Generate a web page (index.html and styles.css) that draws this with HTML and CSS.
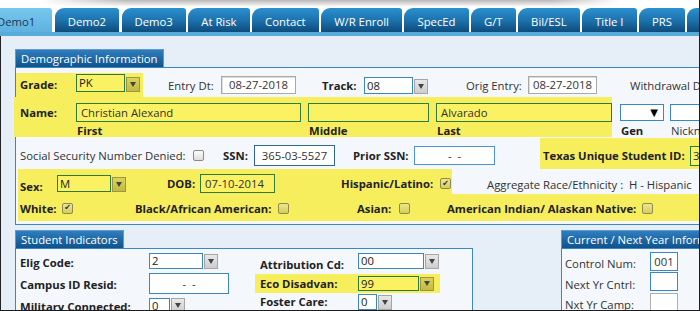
FILE: index.html
```html
<!DOCTYPE html>
<html>
<head>
<meta charset="utf-8">
<link rel="stylesheet" href="styles.css">
</head>
<body>
<div class="frame">
  <div class="shade"></div>
  <nav class="tabs">
    <span class="tab active">Demo1</span>
    <span class="tab">Demo2</span>
    <span class="tab">Demo3</span>
    <span class="tab">At Risk</span>
    <span class="tab">Contact</span>
    <span class="tab">W/R Enroll</span>
    <span class="tab">SpecEd</span>
    <span class="tab">G/T</span>
    <span class="tab">Bil/ESL</span>
    <span class="tab">Title I</span>
    <span class="tab">PRS</span>
    <span class="tab">Health</span>
  </nav>
  <div class="strip"></div>
  <main class="page">
    <section class="sec demo">
      <div class="sec-head">Demographic Information</div>
      <div class="sec-box demo-box">
        <div class="row r1">
          <div class="hl grade">
            <span class="lbl b grade-l">Grade:</span>
            <span class="combo"><span class="sel yel pk">PK</span><span class="btn yel"></span></span>
          </div>
          <span class="lbl entry-l">Entry Dt:</span>
          <span class="inp date">08-27-2018</span>
          <span class="lbl b track-l">Track:</span>
          <span class="combo"><span class="sel track">08</span><span class="btn"></span></span>
          <span class="lbl orig-l">Orig Entry:</span>
          <span class="inp date orig">08-27-2018</span>
          <span class="lbl wd-l">Withdrawal Dt:</span>
        </div>
        <div class="row r2">
          <div class="hl name">
            <span class="lbl b name-l">Name:</span>
            <div class="fcol first"><span class="inp yel-in">Christian Alexand</span><span class="sub b">First</span></div>
            <div class="fcol middle"><span class="inp yel-in"></span><span class="sub b">Middle</span></div>
            <div class="fcol last"><span class="inp yel-in">Alvarado</span><span class="sub b">Last</span></div>
          </div>
          <div class="fcol gen"><span class="inp gen-sel">&#9660;</span><span class="sub b">Gen</span></div>
          <div class="fcol nick"><span class="inp nick-in"></span><span class="sub">Nickname</span></div>
        </div>
        <div class="row r3">
          <span class="lbl ssnd-l">Social Security Number Denied:</span>
          <span class="chk"></span>
          <span class="lbl b ssn-l">SSN:</span>
          <span class="inp ssn">365-03-5527</span>
          <span class="lbl b pssn-l">Prior SSN:</span>
          <span class="inp pssn">-&nbsp;&nbsp;-</span>
          <div class="hl tx">
            <span class="lbl b tx-l">Texas Unique Student ID:</span>
            <span class="inp yel-in tx-in">3</span>
          </div>
        </div>
        <div class="row r4">
          <div class="hl sex">
            <span class="lbl b sex-l">Sex:</span>
            <span class="combo"><span class="sel yel sexsel">M</span><span class="btn yel"></span></span>
            <span class="lbl b dob-l">DOB:</span>
            <span class="inp yel-in dob">07-10-2014</span>
            <span class="lbl b hisp-l">Hispanic/Latino:</span>
            <span class="chk on yel"></span>
          </div>
          <span class="lbl agg-l">Aggregate Race/Ethnicity :&nbsp; H - Hispanic</span>
        </div>
        <div class="row r5">
          <div class="hl race">
            <span class="lbl b white-l">White:</span><span class="chk on yel"></span>
            <span class="lbl b black-l">Black/African American:</span><span class="chk yel"></span>
            <span class="lbl b asian-l">Asian:</span><span class="chk yel"></span>
            <span class="lbl b amer-l">American Indian/ Alaskan Native:</span><span class="chk yel"></span>
          </div>
        </div>
      </div>
    </section>
    <div class="lower">
      <section class="sec ind">
        <div class="sec-head">Student Indicators</div>
        <div class="sec-box ind-box">
          <div class="ind-grid">
            <div class="cell"><span class="lbl b il">Elig Code:</span><span class="combo"><span class="sel elig">2</span><span class="btn"></span></span></div>
            <div class="cell"><span class="lbl b rl attr-l">Attribution Cd:</span><span class="combo"><span class="sel attr">00</span><span class="btn"></span></span></div>
            <div class="cell"><span class="lbl b il">Campus ID Resid:</span><span class="inp campus">-&nbsp;&nbsp;-</span></div>
            <div class="cell hl eco"><span class="lbl b rl">Eco Disadvan:</span><span class="combo"><span class="sel yel ecosel">99</span><span class="btn yel"></span></span></div>
            <div class="cell"><span class="lbl b il">Military Connected:</span><span class="combo"><span class="sel mil">0</span><span class="btn"></span></span></div>
            <div class="cell fost-c"><span class="lbl b rl">Foster Care:</span><span class="combo"><span class="sel fost">0</span><span class="btn"></span></span></div>
          </div>
        </div>
      </section>
      <section class="sec cur">
        <div class="sec-head">Current / Next Year Information</div>
        <div class="sec-box cur-box">
          <div class="cur-row"><span class="lbl cl">Control Num:</span><span class="inp cin">001</span></div>
          <div class="cur-row"><span class="lbl cl">Next Yr Cntrl:</span><span class="inp cin"></span></div>
          <div class="cur-row"><span class="lbl cl">Nxt Yr Camp:</span><span class="inp cin grey"></span></div>
        </div>
      </section>
    </div>
  </main>
</div>
</body>
</html>
```
FILE: styles.css
```css
* { box-sizing: border-box; }
html, body { margin: 0; padding: 0; }
body {
  width: 700px; height: 311px; overflow: hidden; background: #fff;
  font-family: "Open Sans", "Liberation Sans", sans-serif;
  font-size: 11.3px; color: #333;
}
.frame {
  position: relative; width: 700px; height: 311px;
  border-right: 1px solid #1c1c1c; border-bottom: 1px solid #1c1c1c;
  overflow: hidden; display: flex; flex-direction: column; background: #fff;
}
.shade {
  position: absolute; top: 0; left: 40px; width: 580px; height: 7px; z-index: 2;
  background: linear-gradient(rgba(0,0,0,0.28), rgba(0,0,0,0));
  -webkit-mask-image: linear-gradient(to right, transparent, #000 15%, #000 88%, transparent);
  mask-image: linear-gradient(to right, transparent, #000 15%, #000 88%, transparent);
}
.tabs { display: flex; gap: 2.5px; padding-top: 8px; height: 32px; flex: none; }
.tab {
  flex: none; height: 24px; padding: 4px 13px 0; line-height: 20px;
  color: #fff; white-space: nowrap; border-radius: 9px 3px 0 0;
  background: linear-gradient(#2b90d1, #1b70aa 55%, #0d4b7c);
}
.tab.active {
  margin-left: -16px; padding: 4px 17px 0 13px; color: #1b3550;
  background: linear-gradient(#78c7ef, #5db2e0);
}
.strip { height: 4px; flex: none; background: #56abd9; }
.page {
  flex: 1; min-height: 0; background: #e6eef8;
  border-left: 1px solid #222; padding: 13px 0 0 14px;
}
.sec-head {
  display: inline-block; height: 18px; line-height: 17px; padding: 0 5px;
  color: #fff; white-space: nowrap;
  background: linear-gradient(#2f7ebe, #0f538d);
  border: 1px solid #5e9ad0; border-bottom: 0;
}
.sec-box { border: 1px solid #3b87c4; background: #f4f7fc; }
.demo-box { width: 800px; padding: 5px 0 3px; }

.row { display: flex; align-items: center; }
.lbl { flex: none; white-space: nowrap; }
.b { font-weight: 700; color: #222; }
.hl { background: #f7ee5e; }

.inp {
  flex: none; display: block; background: #fff; border: 1px solid #a9a9a9;
  white-space: nowrap; overflow: hidden; color: #333;
}
.yel-in { background: #faf262; border-color: #2f7a3c; padding-left: 4px; }
.combo { flex: none; display: flex; align-items: flex-end; }
.sel {
  display: block; border: 1px solid #3b87c4; background: #fff;
  padding-left: 2px; color: #222; white-space: nowrap;
}
.sel.yel { background: #faf262; border-color: #2f7a3c; }
.btn {
  width: 14px; height: 15px; margin-left: 1px;
  border: 1px solid #a5a5a5; background: linear-gradient(#e8e8e8, #cdcdcd);
  display: flex; align-items: center; justify-content: center;
}
.btn::after {
  content: ""; border-left: 3px solid transparent; border-right: 3px solid transparent;
  border-top: 5px solid #444;
}
.btn.yel { background: linear-gradient(#dbd25c, #c3ba44); border-color: #9c9640; }

.chk {
  flex: none; width: 11px; height: 11px; border: 1px solid #8a8a8a; border-radius: 2px;
  background: linear-gradient(#fdfdfd, #dedede);
  display: flex; align-items: center; justify-content: center;
  font-family: "DejaVu Sans", sans-serif; font-size: 8px; line-height: 1; color: #333;
}
.chk.yel { background: linear-gradient(#eee78a, #d5ce5c); border-color: #8d8a55; }
.chk.on::after { content: "\2714"; }

/* row 1 */
.r1 { height: 24px; }
.grade { width: 127px; align-self: stretch; display: flex; padding-left: 4px; }
.grade-l { width: 56px; line-height: 24px; }
.grade .combo { align-self: flex-start; margin-top: 1px; }
.pk { width: 49px; height: 18px; line-height: 16px; }
.entry-l { margin-left: 25px; width: 53px; }
.date {
  width: 75px; height: 18px; line-height: 16px; text-align: center;
  box-shadow: inset 1px 1px 0 #dcdcdc;
}
.track-l { margin-left: 26px; width: 42px; }
.track { width: 49px; height: 17px; line-height: 15px; }
.orig-l { margin-left: 38px; width: 62px; }
.orig { width: 69px; }
.wd-l { margin-left: 33px; }

/* row 2 */
.r2 { align-items: flex-start; }
.name {
  margin-left: -2px; width: 598px; height: 40px;
  display: flex; align-items: flex-start; padding: 6px 0 0 6px;
}
.name-l { width: 56px; line-height: 19px; }
.fcol { display: flex; flex-direction: column; flex: none; }
.fcol .inp { height: 19px; line-height: 17px; }
.first { width: 225px; }
.middle { width: 121px; margin-left: 7px; }
.last { width: 176px; margin-left: 7px; }
.sub { line-height: 15px; margin-top: 1px; padding-left: 1px; white-space: nowrap; }
.gen { margin-left: 8px; padding-top: 7px; width: 44px; }
.gen .sub, .nick .sub { margin-top: 2px; }
.fcol .gen-sel {
  height: 17px; line-height: 15px; border-color: #3b87c4; text-align: right;
  padding-right: 5px; font-family: "DejaVu Sans", sans-serif; font-size: 10px; color: #000;
}
.nick { margin-left: 6px; padding-top: 7px; }
.fcol .nick-in { width: 70px; height: 17px; border-color: #3b87c4; }

/* row 3 */
.r3 { height: 31px; }
.r3 > .lbl, .r3 > .inp, .r3 > .chk { margin-top: 4px; }
.ssnd-l { margin-left: 4px; width: 173px; }
.ssn-l { margin-left: 19px; width: 31px; }
.ssn {
  width: 81px; height: 21px; line-height: 19px; text-align: center;
  border-color: #2f6797;
}
.pssn-l { margin-left: 18px; width: 61px; }
.pssn {
  width: 81px; height: 19px; line-height: 17px; text-align: center;
  border-color: #4b95d3;
}
.tx {
  margin-left: 45px; flex: 1; align-self: stretch;
  display: flex; align-items: center; padding: 4px 0 0 3px;
}
.tx-l { width: 147px; }
.tx-in { width: 40px; height: 20px; line-height: 18px; padding-left: 2px; }

/* row 4 */
.r4 { height: 25px; }
.sex {
  margin-left: 2px; width: 434px; align-self: stretch;
  display: flex; align-items: center; padding: 4px 0 0 2px;
}
.sex-l { width: 37px; margin-top: 5px; }
.sexsel { width: 54px; height: 17px; line-height: 15px; }
.dob-l { margin-left: 41px; width: 33px; }
.dob { width: 75px; height: 19px; line-height: 17px; }
.hisp-l { margin-left: 66px; width: 99px; }
.agg-l { margin-left: 35px; margin-top: 5px; }

/* row 5 */
.r5 { height: 27px; }
.race {
  margin-left: 2px; flex: 1; align-self: stretch;
  display: flex; align-items: center; padding: 1px 0 0 2px;
}
.white-l { width: 42px; }
.black-l { margin-left: 62px; width: 143px; }
.asian-l { margin-left: 68px; width: 42px; }
.amer-l { margin-left: 37px; width: 195px; }

/* lower sections */
.lower { display: flex; align-items: flex-start; margin-top: 5px; }
.ind { width: 458px; flex: none; }
.ind-box { height: 80px; padding-top: 1px; }
.ind-grid { display: grid; grid-template-columns: 239px 185px; grid-auto-rows: 22px; }
.cell { display: flex; align-items: center; }
.il { width: 133px; padding-left: 4px; padding-top: 3px; }
.rl { width: 103px; padding-left: 5px; padding-top: 3px; }
.attr-l { padding-top: 6px; }
.elig { width: 54px; height: 16px; line-height: 14px; }
.attr { width: 66px; height: 16px; line-height: 14px; }
.campus {
  width: 80px; height: 21px; line-height: 19px; text-align: center;
  border-color: #3b87c4;
}
.eco { height: 19px; align-self: center; }
.eco .rl { padding-top: 1px; }
.ecosel { width: 61px; height: 15px; line-height: 13px; }
.eco .btn { height: 14px; }
.mil { width: 21px; height: 15px; line-height: 13px; }
.fost-c { align-items: flex-start; padding-top: 0; }
.fost-c .rl { padding-top: 0; line-height: 16px; }
.fost { width: 19px; height: 16px; line-height: 14px; }

.cur { margin-left: 88px; flex: 1; }
.cur-box { width: 200px; height: 80px; padding-top: 2px; }
.cur-row { display: flex; align-items: center; height: 20.5px; }
.cl { width: 88px; padding-left: 3px; padding-top: 5px; }
.cin {
  width: 28px; height: 19px; line-height: 17px; text-align: center;
  border-color: #3b87c4;
}
.cin.grey { border-color: #b0b0b0; }
```
